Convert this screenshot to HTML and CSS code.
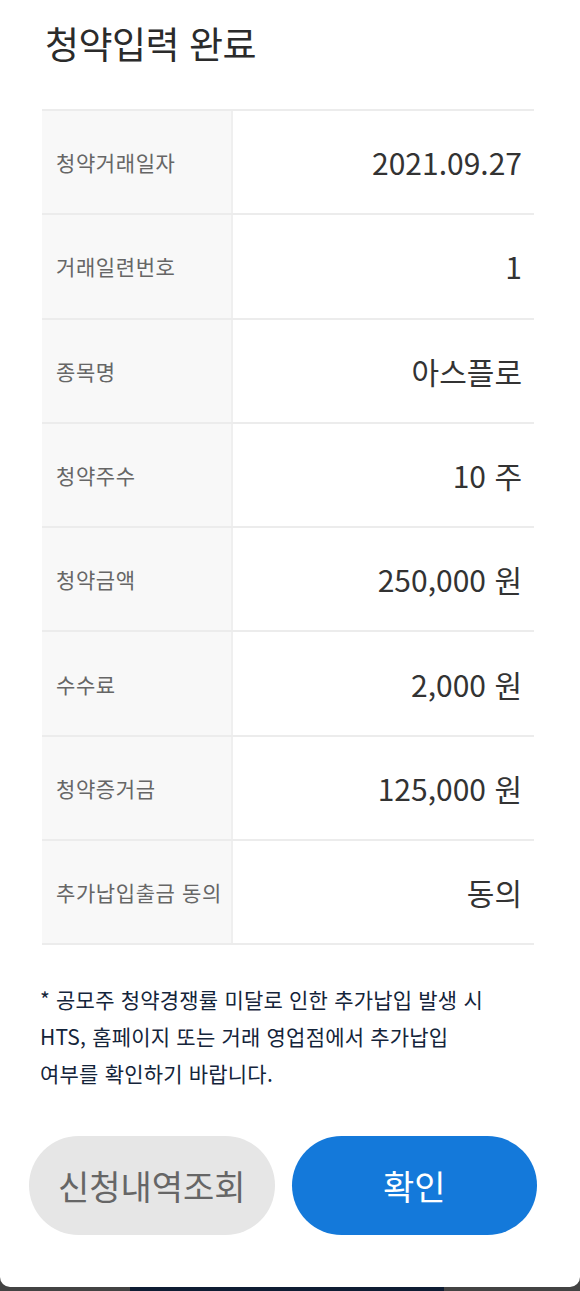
FILE: index.html
```html
<!DOCTYPE html>
<html lang="ko">
<head>
<meta charset="utf-8">
<link rel="stylesheet" href="styles.css">
</head>
<body>
<div class="sheet">
  <h1 class="title">청약입력 완료</h1>
  <div class="table">
    <div class="row"><div class="label">청약거래일자</div><div class="value">2021.09.27</div></div>
    <div class="row"><div class="label">거래일련번호</div><div class="value">1</div></div>
    <div class="row"><div class="label">종목명</div><div class="value">아스플로</div></div>
    <div class="row"><div class="label">청약주수</div><div class="value">10 주</div></div>
    <div class="row"><div class="label">청약금액</div><div class="value">250,000 원</div></div>
    <div class="row"><div class="label">수수료</div><div class="value">2,000 원</div></div>
    <div class="row"><div class="label">청약증거금</div><div class="value">125,000 원</div></div>
    <div class="row"><div class="label">추가납입출금 동의</div><div class="value">동의</div></div>
  </div>
  <p class="note">* 공모주 청약경쟁률 미달로 인한 추가납입 발생 시<br>HTS, 홈페이지 또는 거래 영업점에서 추가납입<br>여부를 확인하기 바랍니다.</p>
  <div class="buttons">
    <button class="btn btn-gray">신청내역조회</button>
    <button class="btn btn-blue">확인</button>
  </div>
</div>
<div class="bottom"><div class="bottom-mid"></div></div>
</body>
</html>
```
FILE: styles.css
```css
* { box-sizing: border-box; }
html, body { margin: 0; padding: 0; }
body {
  width: 580px;
  height: 1291px;
  background: #434343;
  font-family: "Noto Sans CJK KR", "Noto Sans", sans-serif;
  overflow: hidden;
}
.sheet {
  background: #fff;
  height: 1287px;
  border-radius: 0 0 10px 10px;
  padding: 18px 0 0 0;
}
.title {
  margin: 0 0 0 45px;
  font-size: 37px;
  font-weight: 400;
  color: #2b2b2b;
  line-height: 50px;
  letter-spacing: -0.5px;
}
.table {
  margin: 41px 46px 0 42px;
  border-top: 2px solid #ececec;
}
.row {
  display: flex;
  height: 104.3px;
  border-bottom: 2px solid #ececec;
}
.label {
  width: 191px;
  background: #f8f8f8;
  border-right: 2px solid #efefef;
  display: flex;
  align-items: center;
  padding-left: 14px;
  font-size: 21px;
  color: #666;
  letter-spacing: 0.6px;
}
.value {
  flex: 1;
  display: flex;
  align-items: center;
  justify-content: flex-end;
  padding-right: 12px;
  font-size: 30px;
  color: #333;
}
.note {
  margin: 36px 0 0 40px;
  font-size: 21px;
  line-height: 37px;
  font-weight: 400;
  color: #14243a;
  letter-spacing: 0.2px;
}
.buttons {
  display: flex;
  gap: 17px;
  margin: 44px 43px 0 29px;
}
.btn {
  flex: 1;
  height: 99px;
  border: none;
  border-radius: 50px;
  font-family: "Noto Sans CJK KR", "Noto Sans", sans-serif;
  font-size: 34px;
  padding: 0;
}
.btn-gray { background: #e6e6e6; color: #666; }
.btn-blue { background: #1479da; color: #fff; }
.bottom {
  height: 4px;
  display: flex;
}
.bottom-mid {
  width: 314px;
  background: #0e1d33;
  margin-left: 130px;
}
```
